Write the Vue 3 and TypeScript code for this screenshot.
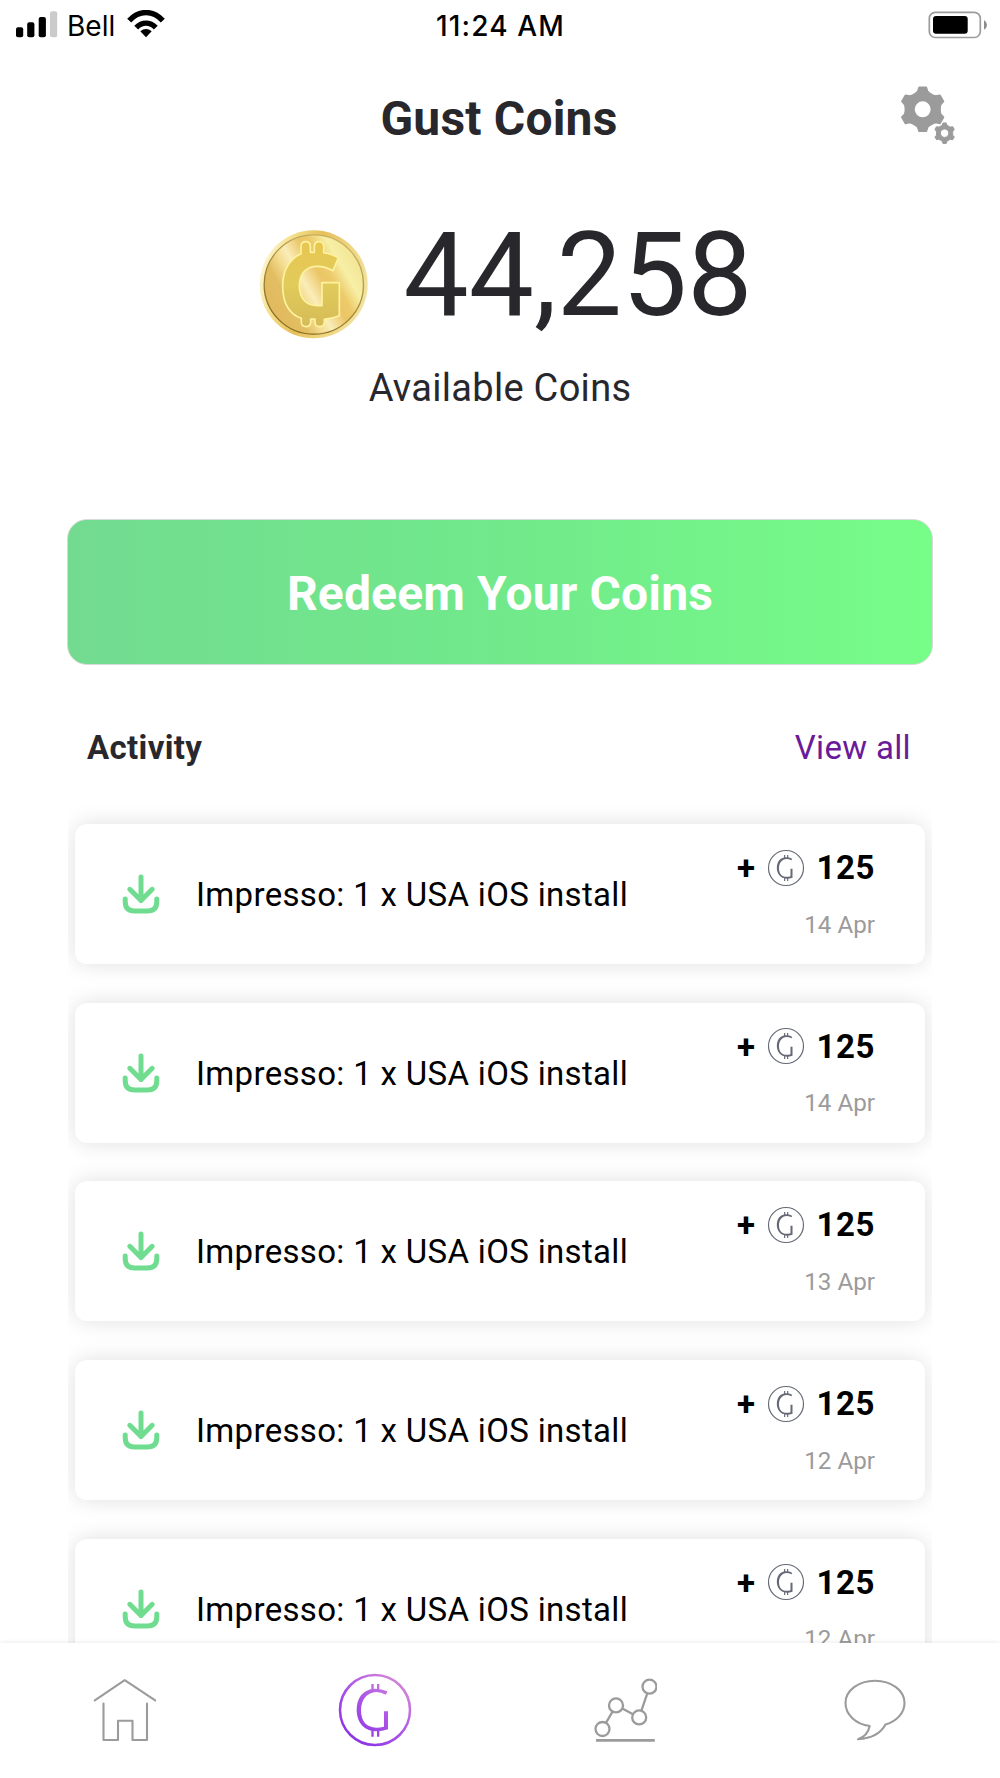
<script setup lang="ts">
interface Activity {
  id: number
  title: string
  amount: number
  date: string
}

const activities: Activity[] = [
  { id: 1, title: 'Impresso: 1 x USA iOS install', amount: 125, date: '14 Apr' },
  { id: 2, title: 'Impresso: 1 x USA iOS install', amount: 125, date: '14 Apr' },
  { id: 3, title: 'Impresso: 1 x USA iOS install', amount: 125, date: '13 Apr' },
  { id: 4, title: 'Impresso: 1 x USA iOS install', amount: 125, date: '12 Apr' },
  { id: 5, title: 'Impresso: 1 x USA iOS install', amount: 125, date: '12 Apr' },
]

// Six-toothed gear outline around (cx, cy); r is the tip radius.
function gear(cx: number, cy: number, r: number): string {
  const points: string[] = []
  const profile: [number, number][] = [
    [-24, 0.75],
    [-15, 0.8],
    [-9, 0.96],
    [9, 0.96],
    [15, 0.8],
    [24, 0.75],
  ]
  for (let i = 0; i < 6; i++) {
    for (const [offset, k] of profile) {
      const a = ((i * 60 - 90 + offset) * Math.PI) / 180
      points.push(`${(cx + Math.cos(a) * r * k).toFixed(2)} ${(cy + Math.sin(a) * r * k).toFixed(2)}`)
    }
  }
  const h = r * 0.39
  return `M${points.join('L')}Z M${cx - h} ${cy}a${h} ${h} 0 1 0 ${2 * h} 0a${h} ${h} 0 1 0 ${-2 * h} 0Z`
}

const bigGear = gear(24.7, 25.3, 23)
const smallGear = gear(46.6, 49.2, 10.8)

const coinMark =
  'M37-56Q20-64 0-64C-38-62-55-36-55 2C-54 38-32 63 4 64Q22 64 39 58V4H27V50Q15 53 4 53C-26 52-42 34-42 0C-41-30-26-52 4-54Q18-54 33-46Z'
</script>

<template>
  <div class="screen">
    <div class="status">
      <div class="carrier">
        <svg class="signal" width="42" height="27" viewBox="0 0 42 27">
          <rect x="0" y="16.3" width="7.2" height="10" rx="2" />
          <rect x="11.2" y="11.3" width="7.2" height="15" rx="2" />
          <rect x="22.7" y="6" width="7.2" height="20.3" rx="2" />
          <rect x="34" y="0.3" width="7.2" height="26" rx="2" fill="#cbcbcb" />
        </svg>
        <span class="bell">Bell</span>
        <svg class="wifi" width="38" height="28" viewBox="0 0 38 28">
          <g fill="none" stroke="#000" stroke-width="5.4">
            <path d="M2.2 10.6C12-.2 26-.2 35.8 10.6" />
            <path d="M9.2 17.6C15 11.6 23 11.6 28.8 17.6" />
          </g>
          <path d="M13.3 21.3Q19 16.5 24.7 21.3L19 27.3Z" />
        </svg>
      </div>
      <div class="time">11:24 AM</div>
      <svg class="battery" width="60" height="28" viewBox="0 0 60 28">
        <rect x="1.3" y="1.3" width="51" height="25.2" rx="6" fill="none" stroke="#9c9c9c" stroke-width="1.7" />
        <rect x="5" y="5" width="34.7" height="17.8" rx="3" />
        <path d="M56 9Q59 11 59 13.9T56 18.8Z" fill="#8d8d8d" />
      </svg>
    </div>

    <header class="header">
      <h1>Gust Coins</h1>
      <svg class="settings" width="60" height="62" viewBox="0 0 60 62">
        <g fill="#9b9b9b" fill-rule="evenodd" stroke="#9b9b9b" stroke-linejoin="round">
          <path :d="bigGear" stroke-width="2" />
          <path :d="smallGear" stroke-width="1" />
        </g>
      </svg>
    </header>

    <div class="balance">
      <svg width="110" height="110" viewBox="54 60 330 330">
        <defs>
          <linearGradient id="coinFace" gradientUnits="userSpaceOnUse" x1="90" y1="300" x2="345" y2="150">
            <stop offset="0" stop-color="#e2b95e" />
            <stop offset=".2" stop-color="#e2be62" />
            <stop offset=".33" stop-color="#f4dc90" />
            <stop offset=".43" stop-color="#faedb8" />
            <stop offset=".6" stop-color="#ebc566" />
            <stop offset=".7" stop-color="#edcb6a" />
            <stop offset=".84" stop-color="#f7efa6" />
            <stop offset="1" stop-color="#f3e695" />
          </linearGradient>
          <linearGradient id="coinRim" x1="0" y1=".35" x2="1" y2=".65">
            <stop offset="0" stop-color="#fdf8d2" />
            <stop offset=".2" stop-color="#f3df8a" />
            <stop offset=".45" stop-color="#e6bf5b" />
            <stop offset=".7" stop-color="#efd57f" />
            <stop offset="1" stop-color="#f2e3a2" />
          </linearGradient>
          <linearGradient id="coinEdge" x1=".8" y1="0" x2=".3" y2="1">
            <stop offset="0" stop-color="#cdb765" />
            <stop offset="1" stop-color="#84681d" />
          </linearGradient>
          <linearGradient id="coinG" x1="0" y1="0" x2="0" y2="1">
            <stop offset="0" stop-color="#e8c650" />
            <stop offset=".5" stop-color="#e1cb5b" />
            <stop offset="1" stop-color="#d5bb57" />
          </linearGradient>
        </defs>
        <circle cx="218" cy="226" r="162" fill="url(#coinRim)" />
        <circle cx="218.5" cy="226.5" r="149" fill="url(#coinFace)" stroke="url(#coinEdge)" stroke-width="4" />
        <path
          d="M292 146L276 185Q250 171 225 172C190 174 175 200 175 232C176 268 195 290 228 290H243V221H295V320Q275 328 250 331V340Q249 353 235 353Q222 352 222 340V330H209V340Q208 353 195 353Q181 352 181 340V328C145 315 125 280 125 230C125 185 145 150 180 134V112Q181 98 194 98Q208 98 208 112V130H220V112Q221 98 234 98Q248 98 248 112V131Q272 134 292 146Z"
          fill="url(#coinG)" stroke="#fdf2a0" stroke-width="5" stroke-linejoin="round"
        />
      </svg>
      <span class="total">44,258</span>
    </div>
    <div class="caption">Available Coins</div>

    <button class="redeem" type="button"><span>Redeem Your Coins</span></button>

    <div class="section">
      <h2>Activity</h2>
      <a class="all">View all</a>
    </div>

    <main class="list">
      <article v-for="item in activities" :key="item.id" class="card">
        <svg class="download" width="38" height="40" viewBox="0 0 38 40">
          <g fill="none" stroke="#70dc8f" stroke-width="5" stroke-linecap="round" stroke-linejoin="round">
            <path d="M19 3V26.5M7.8 15.3L19 26.5L30.2 15.3" />
            <path d="M3.2 25V27.5Q3.2 37 12.5 37H25.5Q34.8 37 34.8 27.5V25" />
          </g>
        </svg>
        <span class="title">{{ item.title }}</span>
        <div class="meta">
          <div class="amount">
            <span class="plus">+</span>
            <svg width="38" height="38" viewBox="-114 -114 228 228">
              <circle r="105" fill="none" stroke="#646975" stroke-width="7" />
              <path :d="coinMark" fill="#646975" />
              <path d="M-8-78V-58M10-78V-58M-8 58V78M10 58V78" stroke="#646975" stroke-width="7" />
            </svg>
            <span class="number">{{ item.amount }}</span>
          </div>
          <div class="date">{{ item.date }}</div>
        </div>
      </article>
    </main>

    <nav class="tabs">
      <a>
        <svg width="64" height="64" viewBox="0 0 64 64" fill="none" stroke="#9b9b9b" stroke-width="2.1" stroke-linecap="round" stroke-linejoin="round">
          <path d="M1.8 22.3L31.7 2.2L62.2 22.3" />
          <path d="M10.5 25.6V62H25V42.8H39.5V62H54V25.6" />
        </svg>
      </a>
      <a>
        <svg width="76" height="76" viewBox="-114 -114 228 228">
          <defs>
            <linearGradient id="tabCoin" gradientUnits="userSpaceOnUse" x1="-60" y1="85" x2="75" y2="-75">
              <stop offset="0" stop-color="#8e35e4" />
              <stop offset=".5" stop-color="#ac55e6" />
              <stop offset="1" stop-color="#cf82d9" />
            </linearGradient>
          </defs>
          <circle r="105" fill="none" stroke="url(#tabCoin)" stroke-width="7.5" />
          <path :d="coinMark" fill="url(#tabCoin)" />
          <path d="M-11-78H-4V-58H-11ZM6-78H13V-58H6ZM-11 58H-4V80H-11ZM6 58H13V80H6Z" fill="url(#tabCoin)" />
        </svg>
      </a>
      <a>
        <svg width="64" height="66" viewBox="0 0 64 66" fill="none" stroke="#9b9b9b" stroke-width="2.3">
          <circle cx="9.5" cy="52" r="7" />
          <circle cx="23" cy="28.4" r="7" />
          <circle cx="46.2" cy="40.4" r="7" />
          <circle cx="56.5" cy="9.7" r="7" />
          <path d="M13 45.8L19.5 34.6M29.3 31.6L40 37.2M48.4 33.7L54.3 16.4" />
          <path d="M3 63.4H61.8" stroke-width="2.7" />
        </svg>
      </a>
      <a>
        <svg width="64" height="64" viewBox="0 0 64 64" fill="none" stroke="#9b9b9b" stroke-width="2.1" stroke-linejoin="round">
          <path d="M26.7 48C12.8 46.2 2.5 36.6 2.5 25C2.5 12.4 15.6 2.8 32 2.8S61.5 12.4 61.5 25C61.5 34.8 54 43 42.5 46.6C38 55 29.5 60.5 15 61.3C21.5 59 25.5 54 26.7 48Z" />
        </svg>
      </a>
    </nav>
  </div>
</template>

<style>
body {
  background: #fff;
}
</style>

<style scoped>
.screen {
  display: flex;
  flex-direction: column;
  width: 1000px;
  height: 1778px;
  overflow: hidden;
  background: #fff;
  color: #28272c;
  font-family: Roboto, "Liberation Sans", sans-serif;
}
svg {
  display: block;
  flex: none;
}
.status {
  display: grid;
  grid-template-columns: 1fr auto 1fr;
  height: 50px;
  padding: 0 12px 0 16px;
  box-sizing: border-box;
  font-family: Inter, sans-serif;
  font-size: 28px;
  line-height: 52px;
  color: #000;
}
.carrier {
  display: flex;
}
.signal {
  margin-top: 11px;
}
.bell {
  width: 46px;
  margin-left: 9px;
}
.wifi {
  margin: 10px 0 0 13.5px;
}
.time {
  margin-right: 3px;
  font-weight: 500;
  letter-spacing: 1.15px;
}
.battery {
  justify-self: end;
  margin-top: 10.5px;
}
.header {
  display: grid;
  grid-template-columns: 1fr auto 1fr;
  align-items: center;
  height: 134px;
  padding: 0 42px;
}
h1 {
  grid-column: 2;
  margin: 4px 2px 0 0;
  font-size: 48px;
  line-height: 56px;
  font-weight: 700;
  letter-spacing: 0.2px;
}
.settings {
  justify-self: end;
  margin-top: -4px;
}
.balance {
  display: flex;
  justify-content: center;
  height: 110px;
  margin-top: 45px;
  padding-left: 11px;
  gap: 35px;
}
.total {
  font-size: 116px;
  line-height: 92px;
}
.caption {
  margin-top: 26px;
  font-size: 38px;
  line-height: 46px;
  letter-spacing: 0.3px;
  text-align: center;
}
.redeem {
  height: 146px;
  margin: 108px 67px 0;
  padding: 4px 0 0;
  border: 1px solid #d5dbd6;
  border-radius: 20px;
  background: linear-gradient(90deg, #72db90, #71e98b 50%, #77fd88);
  color: #fff;
  font: 700 48px/56px Roboto, "Liberation Sans", sans-serif;
  letter-spacing: 0.15px;
}
.section {
  display: flex;
  justify-content: space-between;
  margin-top: 63px;
  padding: 0 89px 0 87px;
  font-size: 33px;
  line-height: 40px;
  letter-spacing: 0.35px;
}
h2 {
  margin: 0;
  font-size: inherit;
  font-weight: 700;
}
.all {
  color: #6a1b9a;
}
.list {
  display: flex;
  flex: 1;
  min-height: 0;
  flex-direction: column;
  gap: 38.7px;
  margin: 0 68px;
  padding: 56px 7px 0;
  overflow: hidden;
}
.card {
  display: flex;
  flex: none;
  align-items: center;
  height: 140px;
  padding: 0 50px 0 47.3px;
  box-sizing: border-box;
  border-radius: 12px;
  background: #fff;
  box-shadow: 0 0 22px rgba(0, 0, 0, 0.13);
}
.title {
  margin: 2px 0 0 35.7px;
  font-size: 33px;
  line-height: 40px;
  letter-spacing: 0.33px;
  color: #000;
  white-space: nowrap;
}
.meta {
  display: flex;
  flex-direction: column;
  align-items: flex-end;
  align-self: flex-start;
  margin: 24px 0 0 auto;
}
.amount {
  display: flex;
  align-items: center;
  height: 39px;
  font-size: 33px;
  font-weight: 700;
  color: #000;
}
.plus {
  margin-right: 12px;
}
.number {
  margin-left: 11.5px;
  letter-spacing: 0.6px;
}
.date {
  margin-top: 22.5px;
  font-size: 24.2px;
  line-height: 30px;
  color: #9b9b9b;
}
.tabs {
  position: relative;
  display: grid;
  flex: none;
  grid-template-columns: repeat(4, 1fr);
  place-items: center;
  height: 135px;
  padding-bottom: 1px;
  box-sizing: border-box;
  background: #fff;
  box-shadow: 0 -1px 4px rgba(0, 0, 0, 0.08);
}
</style>
